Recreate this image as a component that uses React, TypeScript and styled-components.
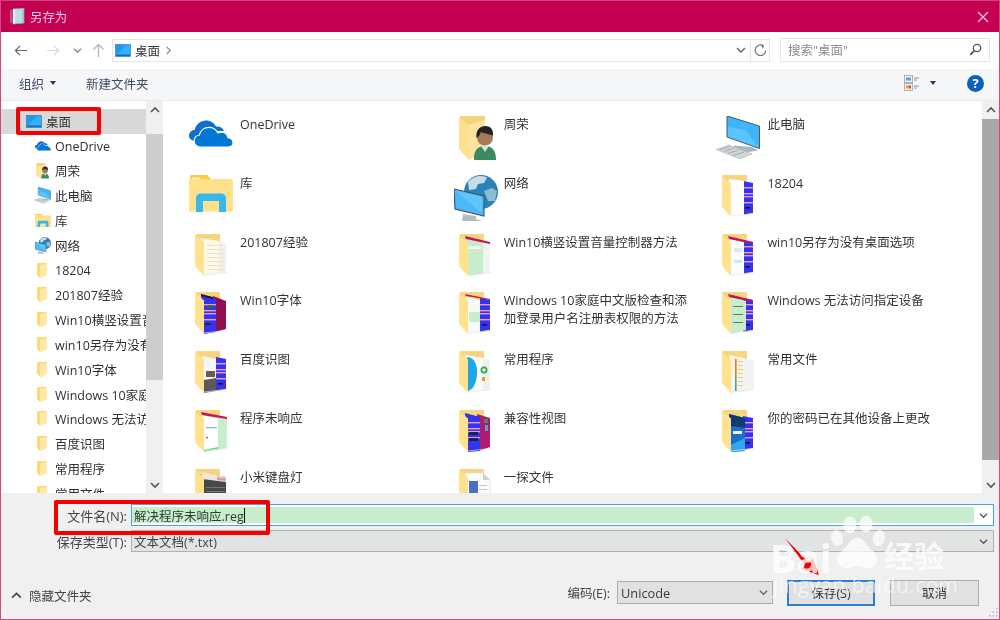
import React from "react";
import styled, { createGlobalStyle } from "styled-components";

const Global = createGlobalStyle`
  html, body { margin: 0; padding: 0; width: 1000px; height: 620px; overflow: hidden; background: #f0f0f0; }
  body { font-family: "Open Sans", "Noto Sans CJK SC", sans-serif; font-size: 12.5px; color: #2f2f2f; }
  * { box-sizing: border-box; }
`;

const Win = styled.div`
  position: relative; width: 1000px; height: 620px; display: flex; flex-direction: column;
  border: 1px solid #cf4a84; border-top-color: #d2447f; overflow: hidden; filter: blur(0.3px);
`;
const TitleBar = styled.div`
  height: 31px; flex: none; background: #c30052; display: flex; align-items: center; padding: 0 10px 0 9px; gap: 4px; color: #f7cfdd;
`;
const TitleText = styled.span` font-size: 12.4px; flex: 1; `;
const NavBar = styled.div`
  height: 37px; flex: none; background: #fff; display: flex; align-items: center; padding: 0 10px 1px 13px;
`;
const NavBtn = styled.div<{ $w: number }>`
  width: ${(p) => p.$w}px; height: 22px; display: flex; align-items: center; justify-content: center; flex: none;
`;
const Address = styled.div`
  width: 658px; height: 23px; border: 1px solid #e3e5e8; display: flex; align-items: center; flex: none; background: #fff;
`;
const Crumbs = styled.div` flex: 1; display: flex; align-items: center; padding-left: 2px; gap: 4px; color: #333; `;
const AddrBtn = styled.div<{ $line?: boolean }>`
  width: 19px; height: 100%; display: flex; align-items: center; justify-content: center; flex: none;
  border-left: ${(p) => (p.$line ? "1px solid #e3e5e8" : "none")};
`;
const Search = styled.div`
  margin-left: 10px; width: 210px; height: 24px; border: 1px solid #e3e5e8; display: flex; align-items: center; justify-content: space-between;
  padding: 0 7px 1px 7px; color: #8a8a8a; flex: none;
`;
const ToolBar = styled.div`
  height: 32px; flex: none; background: #f5f6f7; border-bottom: 1px solid #e9ebed; display: flex; align-items: center; padding: 0 15px 3px 18px; color: #3d4f66;
`;
const ToolLabel = styled.span<{ $mr: number }>` margin-right: ${(p) => p.$mr}px; display: flex; align-items: center; gap: 6px; `;
const Spring = styled.div` flex: 1; `;
const Help = styled.div`
  width: 17px; height: 17px; border-radius: 50%; background: #0a62b8; color: #fff; font-weight: 700; font-size: 13px;
  display: flex; align-items: center; justify-content: center; margin-left: 31px; line-height: 1;
`;
const Caret = styled.i`
  display: block; width: 0; height: 0; border: 3.5px solid transparent; border-top: 4px solid #26385a; border-bottom: 0; margin-left: 10px;
`;
const OrgCaret = styled(Caret)` margin-left: 0; `;
const Body = styled.div` flex: 1; min-height: 0; display: flex; background: #fff; height: 393px; `;
const Side = styled.div` width: 145px; flex: none; padding-top: 8px; overflow: hidden; background: #fff; `;
const SideRow = styled.div<{ $on?: boolean }>`
  height: 24.8px; display: flex; align-items: center; white-space: nowrap; overflow: hidden;
  padding-left: ${(p) => (p.$on ? 25 : 33)}px; gap: 4px;
  background: ${(p) => (p.$on ? "#d9d9d9" : "transparent")}; color: #2f2f2f;
`;
const SideIcon = styled.span<{ $w?: number }>` width: ${(p) => p.$w ?? 17}px; flex: none; display: flex; justify-content: center; align-items: center; `;
const Track = styled.div` width: 17px; flex: none; background: #f0f0f0; display: flex; flex-direction: column; align-items: stretch; `;
const ScrollEnd = styled.div` height: 17px; display: flex; align-items: center; justify-content: center; flex: none; `;
const Thumb = styled.div<{ $top: number; $h: number; $c: string }>`
  margin-top: ${(p) => p.$top}px; height: ${(p) => p.$h}px; background: ${(p) => p.$c}; flex: none;
`;
const TrackFill = styled.div` flex: 1; `;
const Main = styled.div`
  flex: 1; min-width: 0; overflow: hidden; padding: 15px 0 0 26px; display: grid;
  grid-template-columns: repeat(3, 263.7px); grid-auto-rows: 58.83px;
`;
const Item = styled.div` display: flex; align-items: flex-start; min-width: 0; `;
const IconBox = styled.div<{ $dx: number; $dy: number }>`
  width: 51px; flex: none; height: 48px; padding-left: ${(p) => p.$dx}px; padding-top: ${(p) => p.$dy}px;
`;
const ItemText = styled.div` width: 192px; line-height: 17.5px; color: #333; `;
const Footer = styled.div` height: 126px; flex: none; background: #f0f0f0; padding-top: 11px; display: flex; flex-direction: column; `;
const FieldRow = styled.div` display: grid; grid-template-columns: 130px 863px; height: 22px; margin-bottom: 4px; align-items: center; `;
const FieldLabel = styled.label` text-align: right; padding-right: 4px; color: #444; font-size: 13px; `;
const NameBox = styled.div`
  height: 22px; border: 1px solid #4aa0e6; display: flex; background: #fff; align-items: stretch;
`;
const NameFill = styled.div` flex: 1; margin: 2px 0; background: #c7edcc; display: flex; align-items: center; padding: 1px 0 0 2px; color: #2d3d2f; `;
const TextCaret = styled.span` width: 1px; height: 15px; background: #111; `;
const DropEnd = styled.div` width: 19px; display: flex; align-items: center; justify-content: center; flex: none; `;
const TypeBox = styled.div`
  height: 22px; border: 1px solid #adb2b5; background: #e1e3e5; display: flex; align-items: center; padding-left: 2px; color: #444;
`;
const TypeText = styled.span` flex: 1; `;
const ActionRow = styled.div` margin-top: 23px; height: 27px; display: flex; align-items: center; padding: 0 20px 0 10px; `;
const HideToggle = styled.div` display: flex; align-items: center; gap: 7px; flex: 1; color: #444; margin-top: 6px; `;
const EncLabel = styled.span` margin-right: 7px; color: #444; `;
const Select = styled.div`
  width: 156px; height: 23px; border: 1px solid #adadad; background: #e1e1e1; display: flex; align-items: center; justify-content: space-between;
  padding: 0 4px 0 3px; margin-right: 14px; color: #3a3a3a; font-size: 12.8px;
`;
const Btn = styled.div<{ $primary?: boolean; $mr?: number }>`
  width: ${(p) => (p.$primary ? 88 : 89)}px; height: 26px; background: #e1e1e1; display: flex; align-items: center; justify-content: center;
  border: ${(p) => (p.$primary ? "2px solid #2b80d4" : "1px solid #adadad")}; margin-right: ${(p) => p.$mr ?? 0}px; color: #333;
`;
const Grip = styled.svg` position: absolute; right: 1px; bottom: 1px; `;
const RedBox = styled.div<{ $x: number; $y: number; $w: number; $h: number }>`
  position: absolute; left: ${(p) => p.$x}px; top: ${(p) => p.$y}px; width: ${(p) => p.$w}px; height: ${(p) => p.$h}px;
  border: 4px solid #f80000; border-radius: 2px; pointer-events: none;
`;
const Arrow = styled.svg` position: absolute; left: 780px; top: 532px; `;
const Paw = styled.svg` position: absolute; left: 828px; top: 515px; `;
const Mark = styled.div<{ $x: number; $y: number; $s: number; $a: number }>`
  position: absolute; left: ${(p) => p.$x}px; top: ${(p) => p.$y}px; font-size: ${(p) => p.$s}px; line-height: 1; font-weight: 700;
  color: rgba(255,255,255,${(p) => p.$a}); white-space: nowrap;
`;
const MarkThin = styled(Mark)` font-weight: 500; letter-spacing: 0.4px; `;

type ChevProps = { dir?: "up" | "down" | "right" | "left"; size?: number; color?: string; sw?: number };
const Chevron = ({ dir = "down", size = 10, color = "#555", sw = 1.4 }: ChevProps) => {
  const r = { down: 0, up: 180, right: -90, left: 90 }[dir];
  return (
    <svg width={size} height={size} viewBox="0 0 10 10" style={{ transform: `rotate(${r}deg)` }}>
      <polyline points="1,3 5,7 9,3" fill="none" stroke={color} strokeWidth={sw} />
    </svg>
  );
};

const NavArrow = ({ rot = 0, color = "#666" }: { rot?: number; color?: string }) => (
  <svg width="15" height="15" viewBox="0 0 15 15" style={{ transform: `rotate(${rot}deg)` }}>
    <path d="M1.5 7.5H14M6.5 2.5L1.5 7.5L6.5 12.5" fill="none" stroke={color} strokeWidth="1.3" />
  </svg>
);

const Notebook = () => (
  <svg width="16" height="17" viewBox="0 0 16 17">
    <path d="M3 1L14 0.5V15L3 16Z" fill="#b9dfe6" stroke="#9ab6bc" strokeWidth="0.7" />
    <path d="M3 1H5V16H3Z" fill="#e8f2f3" />
    <path d="M1 2.5V15" stroke="#c6d0d2" strokeWidth="1.6" strokeDasharray="1 1" />
    <path d="M13 1.5V15" stroke="#7fb4c0" strokeWidth="1" />
  </svg>
);

const Desktop = () => (
  <svg width="16" height="13" viewBox="0 0 16 13">
    <rect x="0.5" y="0.5" width="15" height="12" fill="#1e9df0" stroke="#3b7fb2" strokeWidth="0.7" />
    <path d="M1 11.5L11 1H15V11.5Z" fill="#31b2fa" />
    <rect x="1" y="10.5" width="14" height="1.4" fill="#0d6cb8" />
  </svg>
);

const CloudIcon = ({ w }: { w: number }) => (
  <svg width={w} height={(w * 27) / 44} viewBox="0 0 44 27">
    <path d="M6 21C1.5 21 0 17.8 0 15.6C0 12.5 2.5 10 5.6 10C7 4.2 11.7 0.5 17 0.5C21.7 0.5 25 3 27 6.5C31 6 34 8 35 11H12V21Z" fill="#0f6fcb" />
    <path d="M11.5 27C7.5 27 5.2 24.2 5.2 21C5.2 17.8 7.4 15.4 10.4 15C11.5 10.5 15.3 7.4 20 7.4C24 7.4 27 9.5 29 13C30.2 12.4 31.4 12.2 32.5 12.2C36 12.2 38.2 14.5 39 17.6C42 18 44 20 44 22.6C44 25 42 27 39.5 27Z" fill="#0078d7" stroke="#fff" strokeWidth="1.1" />
  </svg>
);

const UserIcon = ({ w }: { w: number }) => (
  <svg width={w} height={(w * 44) / 37} viewBox="0 0 37 44">
    <path d="M1 0H26V10H1Z" fill="#f7d27c" />
    <path d="M0 2L10 9L10 44L0 33Z" fill="#ffe08f" />
    <path d="M9 9L26 4V36L10 44Z" fill="#fbe3a0" />
    <path d="M15 42C15 34 19 30 26 30C33 30 37 34 37 44H15Z" fill="#3c8a63" />
    <path d="M22 30L26 36L30 30Z" fill="#c9eadb" />
    <circle cx="26" cy="21.5" r="8" fill="#a57a56" />
    <path d="M17.5 22C16.5 14 21 10 26.5 10C32 10 34.5 14 34 20C31.5 18 26 18 22 16C21 19 19.5 21 17.5 22Z" fill="#242424" />
  </svg>
);

const ComputerIcon = ({ w }: { w: number }) => (
  <svg width={w} height={(w * 43) / 44} viewBox="0 0 44 43">
    <path d="M11 0L43.5 10V32.5L11 21Z" fill="#3fb5fb" stroke="#4b5a66" strokeWidth="1" />
    <path d="M12 20.5V11L30 14L42.5 31.5Z" fill="#5cc4fd" />
    <path d="M18 29.5L36 31L42 34.5L30 36.5L18 32Z" fill="#aeb6ba" />
    <path d="M0 33.5L13 29L36 38L24 43Z" fill="#d0d6d9" stroke="#aeb4b8" strokeWidth="0.6" />
    <path d="M4 33.5L14 30.5M8 35.5L18 32M12 37.5L23 34M17 39.5L28 36" stroke="#98a0a5" strokeWidth="0.8" />
  </svg>
);

const LibraryIcon = ({ w }: { w: number }) => (
  <svg width={w} height={(w * 37) / 44} viewBox="0 0 44 37">
    <path d="M1 2C1 0.6 1.6 0 3 0H18L22 4H13L10 8H1Z" fill="#ffc83d" />
    <rect x="3" y="2.5" width="8" height="2" fill="#fff3cc" />
    <rect x="0" y="4" width="44" height="32.5" rx="1.5" fill="#ffe18c" />
    <path d="M7 37V23C7 20 9 18.5 12 18.5H32C35 18.5 37 20 37 23V37H30V26H14V37Z" fill="#38b6ee" />
  </svg>
);

const NetworkIcon = ({ w }: { w: number }) => (
  <svg width={w} height={(w * 46) / 44} viewBox="0 0 44 46">
    <circle cx="27" cy="17" r="17" fill="#2a82b8" />
    <path d="M14 7C20 0 30 0 33 3L30 8L24 9L22 14L15 15Z" fill="#c7dce8" />
    <path d="M30 16L38 13L43 16L41 26L34 26Z" fill="#8dbbd4" />
    <path d="M0 14L30 21V41L1 34Z" fill="#4cb8fb" stroke="#46525b" strokeWidth="1.1" />
    <path d="M2 16L28 22L28 38Z" fill="#5fc6fd" />
    <path d="M9 39L22 41V44L28 46H8Z" fill="#b6bdc2" />
  </svg>
);

const MiniFolder = () => (
  <svg width="11" height="15" viewBox="0 0 11 15">
    <path d="M0 0H10V12L3 15L0 12Z" fill="#fbd975" />
    <path d="M3 2L10 1V12L3 15Z" fill="#ffe8a8" />
  </svg>
);

const stripes = (x: number, w: number, color = "#f29ac4") =>
  [12, 18, 21, 27].map((y) => <rect key={y} x={x} y={y} width={w} height={1.4} fill={color} />);

const Folder = ({ children }: { children?: React.ReactNode }) => (
  <svg width="32" height="43" viewBox="0 0 32 43">
    <path d="M1 0H25V8H1Z" fill="#f6d57f" />
    {children}
    <path d="M0 1L9 8.5V42L0 32Z" fill="#ffe18e" />
    <path d="M9 41L31 38.5L33 39" stroke="#e4e4e4" strokeWidth="0.7" fill="none" />
  </svg>
);

const Blue = ({ x = 21 }: { x?: number }) => (
  <>
    <path d={`M${x} 6L31 8V38L${x} 40Z`} fill="#3434ee" />
    {stripes(x, 31 - x)}
    <rect x={x + 2} y="32" width="5" height="1.6" fill="#0b1c3c" />
  </>
);

const thumbs: Record<string, React.ReactNode> = {
  a18204: (<><Blue /><path d="M7 4L22 6V40L9 42Z" fill="#fff" /></>),
  a201807: (<>
    <path d="M5 4L24 7V40L9 42Z" fill="#fbf8ec" /><path d="M24 7L31 11V37L24 40Z" fill="#f0efea" />
    {[11, 15, 19, 23, 27, 31, 35].map((y) => <rect key={y} x="12" y={y} width="16" height="1" fill="#ede3bc" />)}
  </>),
  hs: (<>
    <path d="M7 4L24 8V40L9 42Z" fill="#c7edcc" /><path d="M24 8L31 10V38L24 40Z" fill="#f2f4f2" />
    <path d="M6 2L31 8V10L7 5Z" fill="#c4145e" />
    <rect x="10" y="12" width="12" height="3" fill="#f7fbf7" />
  </>),
  ling: (<>
    <Blue />
    <path d="M7 5L22 8V40L9 42Z" fill="#fbfcfd" />
    <path d="M6 2L31 8V10L7 5Z" fill="#c4145e" />
    <rect x="12" y="14" width="8" height="4" fill="#dfe7ee" /><rect x="12" y="26" width="8" height="3" fill="#cfe6f5" />
  </>),
  font: (<>
    <path d="M18 4L31 9V37L20 40Z" fill="#8c1050" />
    <path d="M6 3L21 7V40L9 42Z" fill="#3434ee" />
    {stripes(9, 12)}
    <rect x="12" y="13" width="6" height="3" fill="#3a6a30" /><rect x="10" y="31" width="6" height="2" fill="#0d3a20" />
    <path d="M6 2L18 5V7L6 4Z" fill="#1b1040" />
  </>),
  home: (<>
    <Blue />
    <path d="M7 5L21 8V40L9 42Z" fill="#f4faf5" />
    <rect x="10" y="20" width="11" height="10" fill="#c7edcc" />
    <path d="M6 2L31 7V8L7 4Z" fill="#c4145e" />
  </>),
  noacc: (<>
    <Blue />
    <path d="M7 5L24 9V38L9 42Z" fill="#c7edcc" />
    <path d="M6 2L31 8V10L7 5Z" fill="#c4145e" />
    {[14, 22, 30].map((y) => <rect key={y} x="11" y={y} width="10" height="1" fill="#667a6b" />)}
  </>),
  baidu: (<>
    <Blue />
    <path d="M7 5L21 8V40L9 42Z" fill="#f3f6fb" />
    <path d="M9 29L21 27V40L9 42Z" fill="#5a5a5c" />
    <rect x="11" y="20" width="9" height="6" fill="#6d5a4a" />
  </>),
  prog: (<>
    <path d="M6 4L31 8V38L9 42Z" fill="#fafafa" />
    <path d="M24 8L31 9V38L24 40Z" fill="#f0f0f0" />
    <path d="M8 6C16 6 19 16 18 24C17 34 13 39 9 40Z" fill="#1ea7ea" />
    <circle cx="25" cy="19" r="2.6" fill="none" stroke="#25b04a" strokeWidth="1.8" />
    <rect x="23" y="26" width="3" height="4" fill="#f59a23" />
  </>),
  files: (<>
    <path d="M18 6L32 10V38L20 41Z" fill="#f3f3f3" />
    <path d="M7 4L22 7V40L9 42Z" fill="#f8f4e2" />
    <rect x="13" y="8" width="1.6" height="14" fill="#f0722e" /><rect x="13" y="22" width="1.6" height="9" fill="#5fb365" /><rect x="13" y="31" width="1.6" height="9" fill="#2e9ede" />
    {[10, 14, 18, 22, 26, 30, 34].map((y) => <rect key={y} x="16" y={y} width="5" height="1" fill="#d9d0a8" />)}
  </>),
  noresp: (<>
    <path d="M18 5L32 9V38L20 41Z" fill="#c7edcc" />
    <path d="M7 5L23 9V38L9 42Z" fill="#fff" />
    <path d="M6 2L32 7V9L7 5Z" fill="#c4145e" />
    <path d="M9 40L23 37V38.5L9 42Z" fill="#59e06e" />
    <rect x="11" y="17" width="11" height="1.2" fill="#aaa" /><rect x="11" y="27" width="2" height="1.4" fill="#e33" />
  </>),
  compat: (<>
    <path d="M18 4L31 8V37L20 41Z" fill="#b11a72" />
    <rect x="25" y="9" width="4" height="4" fill="#2e9e4c" /><rect x="26" y="15" width="3" height="6" fill="#5a9ed6" />
    <path d="M6 3L21 7V41L9 42Z" fill="#3434ee" />
    {stripes(9, 12)}
    <rect x="10" y="22" width="9" height="3" fill="#18224a" /><rect x="10" y="28" width="9" height="3" fill="#18224a" />
  </>),
  pass: (<>
    <Blue />
    <path d="M7 4L23 8V41L9 42Z" fill="#1c6fc9" />
    <path d="M7 4L23 8V18L8 16Z" fill="#123a72" />
    <rect x="11" y="21" width="9" height="3" fill="#f0f5fb" />
    <path d="M9 35L23 28V41L9 42Z" fill="#2fa6ef" />
  </>),
  mi: (<>
    <path d="M6 4L31 8V38L9 42Z" fill="#484848" />
    <path d="M6 3L31 8V13L7 10Z" fill="#f2e4df" />
    <path d="M22 8L31 9V12L22 11Z" fill="#e89a9a" />
    {[18, 22, 26, 30, 34].map((y) => <rect key={y} x="11" y={y} width="19" height="1" fill="#757575" />)}
  </>),
  yi: (<>
    <path d="M6 4L24 4L31 11V39L9 42Z" fill="#fbfbfb" stroke="#ddd" strokeWidth="0.6" />
    <path d="M24 4L24 11H31Z" fill="#cfcfcf" />
    <rect x="10" y="12" width="9" height="12" fill="#4e6fc0" />
    <rect x="20" y="16" width="8" height="1" fill="#c6c6c6" /><rect x="20" y="20" width="8" height="1" fill="#c6c6c6" />
  </>),
};

type Entry = { name: React.ReactNode; icon: React.ReactNode; dx: number; dy: number };
const F = (name: React.ReactNode, t: string): Entry => ({ name, icon: <Folder>{thumbs[t]}</Folder>, dx: 6, dy: 0 });

const entries: Entry[] = [
  { name: "OneDrive", icon: <CloudIcon w={44} />, dx: 0, dy: 4 },
  { name: "周荣", icon: <UserIcon w={37} />, dx: 6, dy: 0 },
  { name: "此电脑", icon: <ComputerIcon w={44} />, dx: 0, dy: 0 },
  { name: "库", icon: <LibraryIcon w={44} />, dx: 0, dy: 0 },
  { name: "网络", icon: <NetworkIcon w={44} />, dx: 1, dy: -4 },
  F("18204", "a18204"),
  F("201807经验", "a201807"),
  F("Win10横竖设置音量控制器方法", "hs"),
  F("win10另存为没有桌面选项", "ling"),
  F("Win10字体", "font"),
  F(<>Windows 10家庭中文版检查和添<br />加登录用户名注册表权限的方法</>, "home"),
  F("Windows 无法访问指定设备", "noacc"),
  F("百度识图", "baidu"),
  F("常用程序", "prog"),
  F("常用文件", "files"),
  F("程序未响应", "noresp"),
  F("兼容性视图", "compat"),
  F("你的密码已在其他设备上更改", "pass"),
  F("小米键盘灯", "mi"),
  F("一探文件", "yi"),
];

const sideRows: { name: string; icon: React.ReactNode }[] = [
  { name: "OneDrive", icon: <CloudIcon w={16} /> },
  { name: "周荣", icon: <UserIcon w={13} /> },
  { name: "此电脑", icon: <ComputerIcon w={17} /> },
  { name: "库", icon: <LibraryIcon w={16} /> },
  { name: "网络", icon: <NetworkIcon w={16} /> },
  ...[
    "18204", "201807经验", "Win10横竖设置音量控制器方法", "win10另存为没有桌面选项", "Win10字体",
    "Windows 10家庭中文版检查和添加", "Windows 无法访问指定设备", "百度识图", "常用程序", "常用文件",
  ].map((name) => ({ name, icon: <MiniFolder /> })),
];

export default function App() {
  return (
    <Win>
      <Global />
      <TitleBar>
        <Notebook />
        <TitleText>另存为</TitleText>
        <svg width="12" height="12" viewBox="0 0 12 12"><path d="M1 1L11 11M11 1L1 11" stroke="#f8d5e2" strokeWidth="1.1" /></svg>
      </TitleBar>
      <NavBar>
        <NavBtn $w={14}><NavArrow /></NavBtn>
        <NavBtn $w={18} />
        <NavBtn $w={14}><NavArrow rot={180} color="#d6d6d6" /></NavBtn>
        <NavBtn $w={10} />
        <NavBtn $w={14}><Chevron size={9} color="#888" /></NavBtn>
        <NavBtn $w={28}><NavArrow rot={90} color="#b5b5b5" /></NavBtn>
        <Address>
          <Crumbs>
            <Desktop />
            <span>桌面</span>
            <Chevron dir="right" size={9} color="#888" />
          </Crumbs>
          <AddrBtn><Chevron size={10} color="#666" /></AddrBtn>
          <AddrBtn $line>
            <svg width="13" height="13" viewBox="0 0 13 13"><path d="M9.5 1.8A5.3 5.3 0 1 0 11.8 6.5" fill="none" stroke="#777" strokeWidth="1.2" /><path d="M6.8 0.5L10.2 1.7L8.6 4.8Z" fill="#777" /></svg>
          </AddrBtn>
        </Address>
        <Search>
          <span>搜索"桌面"</span>
          <svg width="13" height="13" viewBox="0 0 13 13"><circle cx="8" cy="5" r="3.7" fill="none" stroke="#555" strokeWidth="1.3" /><path d="M5.3 7.7L1.3 11.8" stroke="#555" strokeWidth="1.8" /></svg>
        </Search>
      </NavBar>
      <ToolBar>
        <ToolLabel $mr={30}>组织<OrgCaret /></ToolLabel>
        <ToolLabel $mr={0}>新建文件夹</ToolLabel>
        <Spring />
        <svg width="16" height="16" viewBox="0 0 16 16">
          <rect x="0.5" y="0.5" width="8" height="7" fill="#eef3f6" stroke="#a9b3ba" />
          <rect x="2" y="2.5" width="5" height="3" fill="#5aa0c8" />
          <rect x="0.5" y="8.5" width="8" height="7" fill="#f5f0e0" stroke="#a9b3ba" />
          <rect x="2" y="10.5" width="3" height="3" fill="#e0a030" />
          <rect x="5" y="10.5" width="2" height="3" fill="#cf4b4b" />
          <path d="M10 3H15M10 5H13M10 11H15M10 13H13" stroke="#8a9298" strokeWidth="1" />
        </svg>
        <Caret />
        <Help>?</Help>
      </ToolBar>
      <Body>
        <Side>
          <SideRow $on><SideIcon $w={16}><Desktop /></SideIcon><span>桌面</span></SideRow>
          {sideRows.map((r) => (
            <SideRow key={r.name}><SideIcon>{r.icon}</SideIcon><span>{r.name}</span></SideRow>
          ))}
        </Side>
        <Track>
          <ScrollEnd><Chevron dir="up" size={10} color="#555" sw={1.6} /></ScrollEnd>
          <Thumb $top={16} $h={246} $c="#cdcdcd" />
          <TrackFill />
          <ScrollEnd><Chevron size={10} color="#555" sw={1.6} /></ScrollEnd>
        </Track>
        <Main>
          {entries.map((e, i) => (
            <Item key={i}>
              <IconBox $dx={e.dx} $dy={e.dy}>{e.icon}</IconBox>
              <ItemText>{e.name}</ItemText>
            </Item>
          ))}
        </Main>
        <Track>
          <ScrollEnd><Chevron dir="up" size={10} color="#555" sw={1.6} /></ScrollEnd>
          <Thumb $top={1} $h={341} $c="#a8a8a8" />
          <TrackFill />
          <ScrollEnd><Chevron size={10} color="#555" sw={1.6} /></ScrollEnd>
        </Track>
      </Body>
      <Footer>
        <FieldRow>
          <FieldLabel>文件名(N):</FieldLabel>
          <NameBox>
            <NameFill>解决程序未响应.reg<TextCaret /></NameFill>
            <DropEnd><Chevron size={9} color="#555" /></DropEnd>
          </NameBox>
        </FieldRow>
        <FieldRow>
          <FieldLabel>保存类型(T):</FieldLabel>
          <TypeBox>
            <TypeText>文本文档(*.txt)</TypeText>
            <DropEnd><Chevron size={9} color="#555" /></DropEnd>
          </TypeBox>
        </FieldRow>
        <ActionRow>
          <HideToggle><Chevron dir="up" size={11} color="#444" sw={1.5} />隐藏文件夹</HideToggle>
          <EncLabel>编码(E):</EncLabel>
          <Select>Unicode<Chevron size={9} color="#666" /></Select>
          <Btn $primary $mr={15}>保存(S)</Btn>
          <Btn>取消</Btn>
        </ActionRow>
      </Footer>
      <Grip width="11" height="11" viewBox="0 0 11 11">
        <path d="M9 1h1.6v1.6H9zM5.5 4.5h1.6v1.6H5.5zM9 4.5h1.6v1.6H9zM2 8h1.6v1.6H2zM5.5 8h1.6v1.6H5.5zM9 8h1.6v1.6H9z" fill="#b5b5b5" />
      </Grip>
      <RedBox $x={15} $y={106} $w={85} $h={28} />
      <RedBox $x={53} $y={499} $w={216} $h={35} />
      <Arrow width="42" height="46" viewBox="0 0 42 46">
        <path d="M4 5L27 29L32 25L38 42L20 36L24 32Z" fill="#f00000" />
      </Arrow>
      <Paw width="60" height="60" viewBox="0 0 60 60">
        <g fill="rgba(255,255,255,0.72)">
          <ellipse cx="8" cy="22" rx="6" ry="8" transform="rotate(-15 8 22)" />
          <ellipse cx="21" cy="9" rx="6.5" ry="8.5" />
          <ellipse cx="37" cy="8" rx="6.5" ry="8.5" />
          <ellipse cx="50" cy="22" rx="6" ry="8" transform="rotate(15 50 22)" />
          <path d="M28 22C36 22 38 31 44 35C50 40 50 51 41 52C34 52.5 33 50 28 50C23 50 21 53 15 52C7 50 6 40 13 35C19 31 20 22 28 22Z" />
        </g>
      </Paw>
      <Mark $x={769} $y={537} $s={39} $a={0.78}>Bai</Mark>
      <Mark $x={846} $y={545} $s={22} $a={0.3}>du</Mark>
      <Mark $x={883} $y={540} $s={30} $a={0.75}>经验</Mark>
      <MarkThin $x={772} $y={574} $s={21} $a={0.6}>jingyan.baidu.com</MarkThin>
    </Win>
  );
}
